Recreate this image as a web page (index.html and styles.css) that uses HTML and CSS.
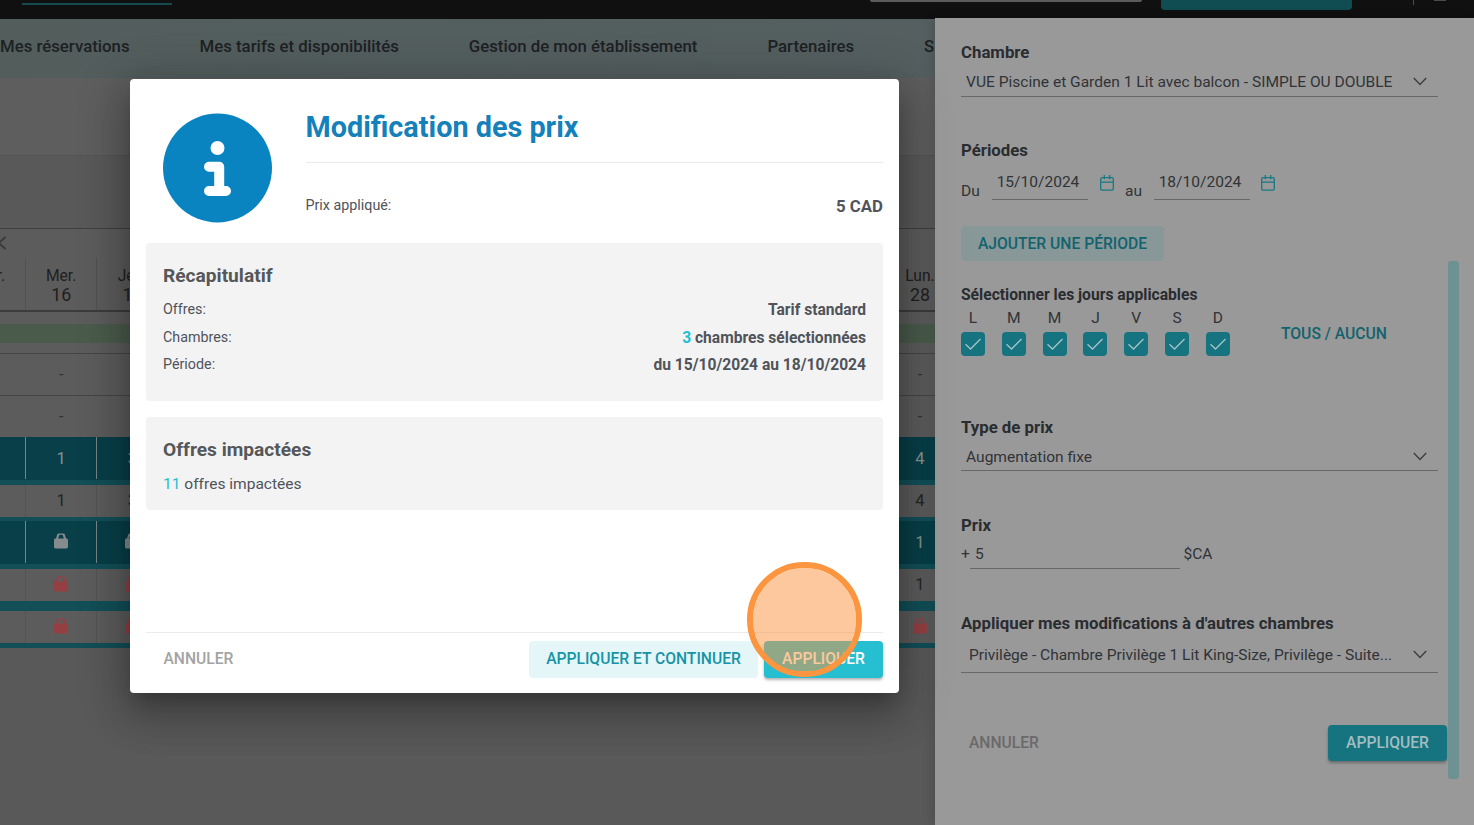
FILE: index.html
```
<!DOCTYPE html>
<html lang="fr">
<head>
<meta charset="utf-8">
<title>Modification des prix</title>
<link rel="stylesheet" href="styles.css">
</head>
<body>
<svg class="defs" width="0" height="0" aria-hidden="true">
  <symbol id="lock" viewBox="0 0 14 16"><path d="M2 5.500 3.200 1.600Q3.600 .4 4.800 .4H9.200Q10.400 .4 10.800 1.600L12 5.500H12.600Q14 5.500 14 6.900V14Q14 15.400 12.600 15.400H1.400Q0 15.400 0 14V6.900Q0 5.500 1.400 5.500ZM4.200 5.500H9.800L8.900 2.400Q8.700 1.800 8.200 1.800H5.800Q5.300 1.800 5.100 2.400Z" fill="currentColor" fill-rule="evenodd"/></symbol>
  <symbol id="calendar" viewBox="0 0 14 16"><path d="M2 2.700H12Q13.300 2.700 13.300 4V13.800Q13.300 15.200 12 15.200H2Q.7 15.200 .7 13.800V4Q.7 2.700 2 2.700ZM.7 7.200H13.300M4.300 0V4.300M9.700 0V4.300" fill="none" stroke="currentColor" stroke-width="1.300"/></symbol>
  <symbol id="down" viewBox="0 0 14 9"><path d="M.8 1 7 7.500 13.200 1" fill="none" stroke="currentColor" stroke-width="1.500"/></symbol>
  <symbol id="check" viewBox="0 0 24 24"><path d="M4.500 12.300 9.500 17 19.500 7" fill="none" stroke="currentColor" stroke-width="1.300"/></symbol>
</svg>

<div class="page">
  <header class="topbar">
    <span class="tab-line"></span>
    <span class="search"></span>
    <span class="top-btn"></span>
    <span class="top-sep"></span>
    <span class="avatar"></span>
  </header>
  <nav class="nav">
    <span>Mes réservations</span>
    <span>Mes tarifs et disponibilités</span>
    <span>Gestion de mon établissement</span>
    <span>Partenaires</span>
    <span>S</span>
  </nav>
  <div class="band light"></div>
  <div class="band dark"></div>
  <div class="strip"><svg width="7" height="14" viewBox="0 0 7 14"><path d="M5.500 1-1 7 5.500 13" fill="none" stroke="currentColor" stroke-width="1.800"/></svg></div>
  <div class="row days"><div>Mar.<b>15</b></div><div>Mer.<b>16</b></div><div>Jeu.<b>17</b></div><div class="late">Lun.<b>28</b></div></div>
  <div class="green"></div>
  <div class="row plain"><div></div><div>-</div><div></div><div class="late">-</div></div>
  <div class="row plain"><div></div><div>-</div><div></div><div class="late">-</div></div>
  <div class="row teal"><div></div><div>1</div><div>3</div><div class="late">4</div></div>
  <div class="row grey"><div></div><div>1</div><div>3</div><div class="late">4</div></div>
  <div class="row teal second"><div></div><div><svg class="lock"><use href="#lock"/></svg></div><div><svg class="lock"><use href="#lock"/></svg></div><div class="late">1</div></div>
  <div class="row grey"><div></div><div><svg class="lock red"><use href="#lock"/></svg></div><div><svg class="lock red"><use href="#lock"/></svg></div><div class="late">1</div></div>
  <div class="row grey last"><div></div><div><svg class="lock red"><use href="#lock"/></svg></div><div><svg class="lock red"><use href="#lock"/></svg></div><div class="late"><svg class="lock red"><use href="#lock"/></svg></div></div>
</div>

<aside class="drawer">
  <h3>Chambre</h3>
  <div class="select room"><span>VUE Piscine et Garden 1 Lit avec balcon - SIMPLE OU DOUBLE</span><svg class="down"><use href="#down"/></svg></div>
  <h3 class="g43">Périodes</h3>
  <div class="dates">
    <span class="lbl">Du</span><span class="date">15/10/2024</span><svg class="cal"><use href="#calendar"/></svg>
    <span class="lbl au">au</span><span class="date">18/10/2024</span><svg class="cal end"><use href="#calendar"/></svg>
  </div>
  <button class="btn soft add">AJOUTER UNE PÉRIODE</button>
  <h4>Sélectionner les jours applicables</h4>
  <div class="week">
    <div class="boxes">
      <label>L<svg><use href="#check"/></svg></label><label>M<svg><use href="#check"/></svg></label><label>M<svg><use href="#check"/></svg></label><label>J<svg><use href="#check"/></svg></label><label>V<svg><use href="#check"/></svg></label><label>S<svg><use href="#check"/></svg></label><label>D<svg><use href="#check"/></svg></label>
    </div>
    <span class="all">TOUS / AUCUN</span>
  </div>
  <h3 class="g61">Type de prix</h3>
  <div class="select type"><span>Augmentation fixe</span><svg class="down"><use href="#down"/></svg></div>
  <h3 class="g44">Prix</h3>
  <div class="price"><span class="plus">+</span><span class="amount">5</span><span class="cur">$CA</span></div>
  <h3 class="g44">Appliquer mes modifications à d'autres chambres</h3>
  <div class="select rooms"><span>Privilège - Chambre Privilège 1 Lit King-Size, Privilège - Suite...</span><svg class="down"><use href="#down"/></svg></div>
  <div class="actions"><span class="cancel">ANNULER</span><button class="btn main">APPLIQUER</button></div>
  <span class="scroll"></span>
</aside>

<main class="modal">
  <div class="head">
    <svg class="info" viewBox="0 0 109 109"><circle cx="54.500" cy="54.500" r="54.500" fill="#0984c1"/><circle cx="54.500" cy="34.500" r="7" fill="#fff"/><path d="M46 53.200H56.200V77.500M46 77.500H63" fill="none" stroke="#fff" stroke-width="10" stroke-linecap="round" stroke-linejoin="round"/></svg>
    <div class="head-text">
      <h1>Modification des prix</h1>
      <div class="line"><span>Prix appliqué:</span><strong>5 CAD</strong></div>
    </div>
  </div>
  <section class="card recap">
    <h2>Récapitulatif</h2>
    <div class="line"><span>Offres:</span><strong>Tarif standard</strong></div>
    <div class="line"><span>Chambres:</span><strong><em>3</em> chambres sélectionnées</strong></div>
    <div class="line"><span>Période:</span><strong>du 15/10/2024 au 18/10/2024</strong></div>
  </section>
  <section class="card offers">
    <h2>Offres impactées</h2>
    <p><em>11</em> offres impactées</p>
  </section>
  <footer class="foot">
    <span class="cancel">ANNULER</span>
    <button class="btn soft">APPLIQUER ET CONTINUER</button>
    <button class="btn main">APPLIQUER</button>
  </footer>
  <span class="pointer"></span>
</main>
</body>
</html>
```
FILE: styles.css
```
* { box-sizing: border-box; }
body { margin: 0; width: 1474px; height: 825px; overflow: hidden; position: relative; background: #595959; font-family: Roboto, "Liberation Sans", sans-serif; font-size: 16px; color: #2c2e31; }
h1, h2, h3, h4, p { margin: 0; }
em { font-style: normal; color: #25bfd1; }
.defs { position: absolute; }

/* Calendar page behind the overlays */
.page { width: 1474px; height: 825px; overflow: hidden; }
.topbar { height: 19px; background: #101010; display: flex; align-items: flex-start; }
.tab-line { width: 150px; height: 2px; margin: 3px 0 0 22px; background: #154a4e; }
.search { width: 272px; height: 2px; margin-left: 698px; background: #5c5c5c; border-radius: 0 0 8px 8px; }
.top-btn { width: 191px; height: 10px; margin-left: 19px; background: #104d53; border-radius: 0 0 4px 4px; }
.top-sep { width: 1px; height: 5px; margin-left: 61px; background: #4c4c4c; }
.avatar { width: 12px; height: 1px; margin-left: 20px; background: #4c4c4c; }
.nav { height: 59px; background: linear-gradient(90deg, #525d5c, #566063); display: flex; gap: 70px; font-weight: 500; font-size: 16.800px; line-height: 55px; color: #1d2123; white-space: nowrap; }
.band { height: 78px; background: #5e5e5e; border-bottom: 1px solid #545454; }
.band.dark { height: 73px; background: #595959; border-bottom: 1px solid #3f3f3f; }
.strip { height: 29px; padding-top: 7px; background: #5c5c5c; color: #393939; line-height: 0; }
.row { display: grid; grid-template-columns: 71.300px 71.300px 71.300px 1fr; margin-left: -45.300px; width: 1001.300px; height: 42px; }
.row > div { display: flex; align-items: center; justify-content: center; border-right: 1px solid transparent; }
.row > .late { justify-self: end; width: 72px; border: 0; }
.days { height: 54px; background: #5c5c5c; border-bottom: 2px solid #3c3c3c; font-size: 15.600px; color: #202020; }
.days > div { flex-direction: column; border-right-color: #525252; line-height: 19px; padding-top: 4px; }
.days b { font-weight: 400; font-size: 17.800px; line-height: 18px; padding-bottom: 1px; }
.green { height: 42px; background: linear-gradient(#5c5c5c 12px, #4a5b4b 12px, #4a5b4b 31px, #5c5c5c 31px); border-bottom: 1px solid #454545; }
.plain { background: #5c5c5c; border-bottom: 1px solid #454545; color: #303030; }
.plain + .plain { height: 41px; border-bottom: 0; }
.teal { height: 48px; background: #083f48; border-bottom: 5px solid #124f57; color: #869395; font-size: 16.500px; }
.teal > div { border-right-color: #778486; height: 42px; }
.grey { height: 32px; background: #5c5c5c; color: #242424; font-size: 16.500px; }
.grey > div { border-right-color: #545454; padding-bottom: 1px; }
.teal.second { height: 52px; border-top: 4px solid #124f57; }
.second + .grey { height: 42px; border-bottom: 10px solid #124f57; }
.last { height: 37px; border-bottom: 5px solid #124f57; }
.lock { width: 14px; height: 16px; color: #858c8d; margin-top: -2px; }
.lock.red { color: #944043; }

/* Shared controls */
.btn { font-family: inherit; font-size: 15.650px; font-weight: 500; border: 0; border-radius: 4px; padding: 0 0 2px; white-space: nowrap; text-align: center; }
.cancel { font-weight: 500; font-size: 15.650px; }

/* Side drawer */
.drawer { position: absolute; left: 935px; top: 18px; width: 539px; height: 807px; padding: 24px 36px 0 26px; background: #999; box-shadow: -3px 0 10px rgba(0,0,0,.12); color: #313337; display: flex; flex-direction: column; align-items: stretch; font-size: 15.550px; }
.drawer h3, .drawer h4 { font-size: 16.800px; line-height: 21px; height: 20px; font-weight: 700; color: #292c30; white-space: nowrap; }
.drawer h4 { font-size: 15.630px; line-height: 20px; margin-top: 24px; }
.drawer .g43 { margin-top: 43px; }
.drawer .g44 { margin-top: 44px; }
.drawer .g61 { margin-top: 61px; }
.select { height: 35px; border-bottom: 1px solid #66686a; display: flex; justify-content: space-between; align-items: center; padding: 5px 11px 0 5px; white-space: nowrap; }
.select.type { height: 34px; padding-top: 6px; }
.select.rooms { height: 40px; padding: 4px 11px 0 8px; font-size: 15.520px; }
.down { width: 14px; height: 9px; color: #3e4043; }
.dates { height: 40px; display: flex; align-items: flex-start; }
.lbl { width: 31px; padding-top: 21px; line-height: 20px; }
.lbl.au { width: 29px; margin-left: 11px; }
.date { width: 96px; height: 40px; padding: 12px 4px 0 0; line-height: 20px; text-align: center; border-bottom: 1px solid #66686a; }
.cal { width: 14px; height: 16px; margin: 15px 0 0 12px; color: #187983; }
.cal.end { margin-left: 11px; }
.btn.soft.add { width: 203px; height: 35px; padding-bottom: 1px; margin-top: 26px; background: #889798; color: #12636e; }
.week { display: flex; height: 51px; padding-top: 3px; }
.boxes { display: flex; gap: 16.830px; }
.boxes label { width: 24px; display: flex; flex-direction: column; align-items: center; gap: 4px; line-height: 20px; }
.boxes svg { width: 24px; height: 24px; background: #15747f; border-radius: 4px; color: #a5c4c7; flex: none; }
.all { margin: 16px 0 0 51px; line-height: 20px; font-size: 15.700px; font-weight: 500; color: #12636e; }
.price { height: 34px; display: flex; line-height: 20px; padding-top: 9px; }
.plus { width: 9px; }
.amount { width: 210px; height: 25px; padding-left: 5px; border-bottom: 1px solid #66686a; }
.cur { margin-left: 3.500px; line-height: 21px; }
.actions { display: flex; justify-content: space-between; align-items: center; margin: 52px -9px 0 8px; height: 36px; color: #6a6a6a; }
.actions .cancel { padding-bottom: 2px; }
.drawer .main { width: 119px; height: 36px; background: #15747f; color: #a2bec1; box-shadow: 0 2px 3px rgba(0,0,0,.3); }
.scroll { position: absolute; left: 513px; top: 243px; width: 11px; height: 518px; border-radius: 3px; background: #6e9193; }

/* Confirmation dialog */
.modal { position: absolute; left: 130px; top: 79px; width: 769px; height: 614px; padding: 34px 16px 15px; background: #fff; border-radius: 4px; display: flex; flex-direction: column; color: #50545a; box-shadow: 0 11px 15px -7px rgba(0,0,0,.2), 0 24px 38px 3px rgba(0,0,0,.14), 0 9px 46px 8px rgba(0,0,0,.22); }
.head { height: 130px; display: flex; gap: 33.500px; padding-left: 17px; }
.info { width: 109px; height: 110px; flex: none; }
.head-text { flex: 1; }
h1 { font-size: 28.800px; line-height: 28px; height: 50px; border-bottom: 1px solid #ebebeb; color: #1481ba; font-weight: 700; }
.line { display: flex; justify-content: space-between; font-size: 14.300px; line-height: 20px; height: 20px; white-space: nowrap; }
.line strong { font-size: 15.600px; line-height: 22px; font-weight: 700; }
.head .line { margin-top: 32px; }
.head .line strong { font-size: 16.800px; }
.card { background: #f3f3f3; border-radius: 4px; padding: 21px 17px 0; }
.card h2 { font-size: 19.150px; line-height: 24px; font-weight: 700; color: #55575a; }
.recap { height: 158px; }
.recap .line { margin-top: 7.600px; }
.recap .line:nth-child(2) { margin-top: 11px; }
.offers { height: 93px; margin-top: 16px; }
.offers p { margin-top: 12px; line-height: 20px; font-size: 15.550px; }
.foot { margin-top: auto; height: 46px; border-top: 1px solid #ebebeb; display: flex; padding-top: 8px; }
.foot .cancel { margin: 0 auto 0 17.500px; line-height: 36px; color: #a3a3a3; }
.foot .soft { width: 229px; height: 37px; background: #e4f6f8; color: #1694a5; }
.foot .main { width: 119px; height: 37px; margin-left: 6px; background: #25bfd1; color: #fff; box-shadow: 0 2px 3px rgba(0,0,0,.3); }
.pointer { position: absolute; left: 617px; top: 483px; width: 115px; height: 115px; border-radius: 50%; border: 6px solid #fb953f; background: rgba(251,146,60,.5); background-clip: padding-box; }
```
